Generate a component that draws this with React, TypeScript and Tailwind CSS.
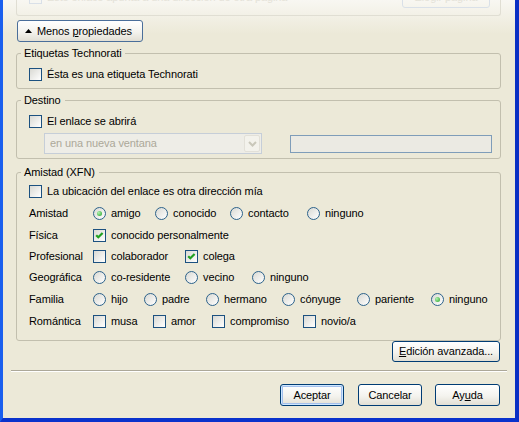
import clsx from "clsx";
import type { ReactNode } from "react";

function Check({ checked = false }: { checked?: boolean }) {
  return (
    <span className="flex h-[13px] w-[13px] shrink-0 items-center justify-center border border-[#1C5180] bg-[linear-gradient(135deg,#D9D9D3,#FFFFFF)]">
      {checked && (
        <svg width="11" height="11" viewBox="0 0 11 11">
          <path d="M2.2 5.2 L4.3 7.3 L8.6 3" fill="none" stroke="#21A121" strokeWidth="2.2" />
        </svg>
      )}
    </span>
  );
}

function Radio({ checked = false }: { checked?: boolean }) {
  return (
    <span className="flex h-[13px] w-[13px] shrink-0 items-center justify-center rounded-full border border-[#2C628B] bg-[linear-gradient(135deg,#D9D9D3,#FFFFFF)]">
      {checked && (
        <span className="h-[5px] w-[5px] rounded-full bg-[radial-gradient(circle_at_35%_35%,#B2F2B2,#21A121)]" />
      )}
    </span>
  );
}

function Opt({
  label,
  radio = false,
  checked = false,
  className = "",
}: {
  label: string;
  radio?: boolean;
  checked?: boolean;
  className?: string;
}) {
  return (
    <div className={clsx("flex shrink-0 items-center gap-[5px]", className)}>
      {radio ? <Radio checked={checked} /> : <Check checked={checked} />}
      <span className="whitespace-nowrap">{label}</span>
    </div>
  );
}

function Btn({
  children,
  className = "",
  def = false,
}: {
  children: ReactNode;
  className?: string;
  def?: boolean;
}) {
  return (
    <button
      className={clsx(
        "flex shrink-0 items-center rounded-[3px] border bg-[linear-gradient(180deg,#FFFFFF,#F4F3EE_55%,#E2DFD4)] text-[11px] leading-[13px] text-black",
        def && "shadow-[inset_0_0_0_1px_#CEE7FF,inset_0_0_0_2px_#A3BFEC]",
        className
      )}
    >
      {children}
    </button>
  );
}

function Group({
  title,
  className = "",
  children,
}: {
  title: string;
  className?: string;
  children: ReactNode;
}) {
  return (
    <div className={clsx("flex flex-col rounded-[3px] border border-[#C2BFAE]", className)}>
      <span className="-mt-[7px] ml-[4px] self-start bg-[#ECE9D8] pl-[3px] pr-[4px]">{title}</span>
      {children}
    </div>
  );
}

function Row({ label, h = "h-[22px]", children }: { label: string; h?: string; children: ReactNode }) {
  return (
    <div className={clsx("flex items-center", h)}>
      <span className="w-[64px] shrink-0">{label}</span>
      {children}
    </div>
  );
}

export default function App() {
  return (
    <div className="flex h-[422px] w-[519px] overflow-hidden border-b-[4px] border-l-[3px] border-r-[4px] border-b-[#0A32CC] border-l-[#1A5FEE] border-r-[#0A2FC4] bg-[linear-gradient(180deg,#F8F7F2,#ECE9D8_34px)] font-['Liberation_Sans',Arial,sans-serif] text-[11px] leading-[13px] tracking-[-0.1px] text-black">
      <div className="flex flex-1 flex-col">
        <div className="flex flex-col pl-[13px] pr-[14px]">
          {/* faded group box scrolled above */}
          <div className="flex h-[16px] items-start justify-between overflow-hidden rounded-b-[3px] border-x border-b border-[#E0DED3]">
            <div className="-mt-[9px] flex items-center gap-[5px] pl-[12px] text-[#E4E2D8]">
              <span className="h-[13px] w-[13px] border border-[#D9E0E8] bg-[#F6F6F2]" />
              <span className="whitespace-nowrap">Este enlace apunta a una dirección de otra página</span>
            </div>
            <div className="-mt-[14px] mr-[10px] flex h-[22px] w-[88px] items-center justify-center rounded-[3px] border border-[#D9E0E8] text-[#E4E2D8]">
              Elegir página
            </div>
          </div>

          <Btn className="ml-[1px] mt-[4px] h-[22px] w-[126px] gap-[5px] border-[#4A6E9A] pl-[7px]">
            <svg width="7" height="4" viewBox="0 0 7 4">
              <polygon points="3.5,0 7,4 0,4" fill="#000" />
            </svg>
            <span>
              Menos <u>p</u>ropiedades
            </span>
          </Btn>

          <Group title="Etiquetas Technorati" className="mt-[11px] pb-[7px]">
            <div className="mt-[8px] pl-[12px]">
              <Opt label="Ésta es una etiqueta Technorati" />
            </div>
          </Group>

          <Group title="Destino" className="mt-[11px] pb-[4px]">
            <div className="mt-[8px] flex flex-col pl-[12px]">
              <Opt label="El enlace se abrirá" />
              <div className="ml-[15px] mt-[5px] flex items-center">
                <div className="flex h-[21px] w-[218px] items-center border border-[#C6CED8] bg-[#EEEDE7]">
                  <span className="flex-1 pl-[5px] text-[#ACA899]">en una nueva ventana</span>
                  <span className="m-[1px] flex w-[16px] items-center justify-center self-stretch rounded-[2px] border border-[#E2E0D8] bg-[#F3F2EC]">
                    <svg width="9" height="6" viewBox="0 0 9 6">
                      <path d="M1 1 L4.5 4.5 L8 1" fill="none" stroke="#C9C7BA" strokeWidth="2" />
                    </svg>
                  </span>
                </div>
                <div className="ml-[28px] h-[18px] w-[202px] border border-[#7F9DB9] bg-[#EBEAE3]" />
              </div>
            </div>
          </Group>

          <Group title="Amistad (XFN)" className="mt-[13px] pb-[8px]">
            <div className="mt-[1px] flex flex-col pl-[12px]">
              <div className="flex h-[22px] items-center">
                <Opt label="La ubicación del enlace es otra dirección mía" />
              </div>
              <Row label="Amistad">
                <Opt radio checked label="amigo" className="w-[62px]" />
                <Opt radio label="conocido" className="w-[75px]" />
                <Opt radio label="contacto" className="w-[77px]" />
                <Opt radio label="ninguno" />
              </Row>
              <Row label="Física">
                <Opt checked label="conocido personalmente" />
              </Row>
              <Row label="Profesional" h="h-[20px]">
                <Opt label="colaborador" className="w-[92px]" />
                <Opt checked label="colega" />
              </Row>
              <Row label="Geográfica">
                <Opt radio label="co-residente" className="w-[92px]" />
                <Opt radio label="vecino" className="w-[67px]" />
                <Opt radio label="ninguno" />
              </Row>
              <Row label="Familia">
                <Opt radio label="hijo" className="w-[51px]" />
                <Opt radio label="padre" className="w-[62px]" />
                <Opt radio label="hermano" className="w-[76px]" />
                <Opt radio label="cónyuge" className="w-[75px]" />
                <Opt radio label="pariente" className="w-[74px]" />
                <Opt radio checked label="ninguno" />
              </Row>
              <Row label="Romántica">
                <Opt label="musa" className="w-[60px]" />
                <Opt label="amor" className="w-[59px]" />
                <Opt label="compromiso" className="w-[91px]" />
                <Opt label="novio/a" />
              </Row>
            </div>
          </Group>

          <div className="flex justify-end pr-[1px]">
            <Btn className="h-[21px] w-[108px] justify-center border-[#003C74]">
              <span>
                <u>E</u>dición avanzada...
              </span>
            </Btn>
          </div>
        </div>

        <div className="mx-[8px] mt-[8px] h-[2px] border-b border-t border-b-white border-t-[#ACA899]" />

        <div className="mt-[12px] flex justify-end pr-[15px]">
          <Btn def className="h-[22px] w-[64px] justify-center border-[#003C74]">
            Aceptar
          </Btn>
          <Btn className="ml-[14px] h-[22px] w-[64px] justify-center border-[#003C74]">
            Cancelar
          </Btn>
          <Btn className="ml-[13px] h-[22px] w-[65px] justify-center border-[#003C74]">
            <span>
              Ay<u>u</u>da
            </span>
          </Btn>
        </div>
      </div>
    </div>
  );
}
